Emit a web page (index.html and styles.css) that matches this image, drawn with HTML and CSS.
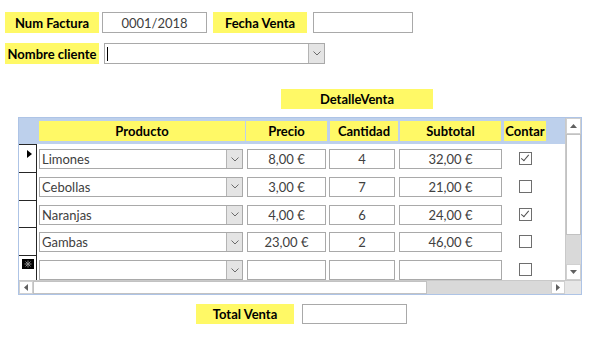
FILE: index.html
```html
<!DOCTYPE html>
<html lang="es">
<head>
  <meta charset="UTF-8">
  <title>Factura de venta</title>
  <link rel="stylesheet" href="styles.css">
</head>
<body>

  <div class="form">

    <!-- CABECERA -->
    <div class="line first">
      <div class="tag w-num">Num Factura</div>
      <div class="box w-factura">0001/2018</div>
      <div class="tag w-fecha">Fecha Venta</div>
      <div class="box w-fechabox"></div>
    </div>

    <div class="line second">
      <div class="tag w-num">Nombre cliente</div>
      <div class="combo w-cliente">
        <span class="caret"></span>
        <span class="drop"><svg width="8" height="5" viewBox="0 0 8 5"><polyline points="0.5,0.5 4,4 7.5,0.5" fill="none" stroke="#6b6b6b" stroke-width="1"/></svg></span>
      </div>
    </div>

    <div class="caption">DetalleVenta</div>

    <!-- SUBFORMULARIO -->
    <div class="grid">
      <div class="grid-body">
        <div class="grid-rows">

          <div class="grow head">
            <div class="sel"></div>
            <div class="hcell c-prod">Producto</div>
            <div class="hcell c-precio">Precio</div>
            <div class="hcell c-cant">Cantidad</div>
            <div class="hcell c-sub">Subtotal</div>
            <div class="hcell c-contar">Contar</div>
          </div>

          <div class="grow">
            <div class="sel"><span class="current"></span></div>
            <div class="combo f-prod">Limones<span class="drop"><svg width="8" height="5" viewBox="0 0 8 5"><polyline points="0.5,0.5 4,4 7.5,0.5" fill="none" stroke="#6b6b6b" stroke-width="1"/></svg></span></div>
            <div class="box f-precio">8,00 €</div>
            <div class="box f-cant">4</div>
            <div class="box f-sub">32,00 €</div>
            <div class="check-cell"><span class="check on"></span></div>
          </div>

          <div class="grow">
            <div class="sel"></div>
            <div class="combo f-prod">Cebollas<span class="drop"><svg width="8" height="5" viewBox="0 0 8 5"><polyline points="0.5,0.5 4,4 7.5,0.5" fill="none" stroke="#6b6b6b" stroke-width="1"/></svg></span></div>
            <div class="box f-precio">3,00 €</div>
            <div class="box f-cant">7</div>
            <div class="box f-sub">21,00 €</div>
            <div class="check-cell"><span class="check"></span></div>
          </div>

          <div class="grow">
            <div class="sel"></div>
            <div class="combo f-prod">Naranjas<span class="drop"><svg width="8" height="5" viewBox="0 0 8 5"><polyline points="0.5,0.5 4,4 7.5,0.5" fill="none" stroke="#6b6b6b" stroke-width="1"/></svg></span></div>
            <div class="box f-precio">4,00 €</div>
            <div class="box f-cant">6</div>
            <div class="box f-sub">24,00 €</div>
            <div class="check-cell"><span class="check on"></span></div>
          </div>

          <div class="grow">
            <div class="sel"></div>
            <div class="combo f-prod">Gambas<span class="drop"><svg width="8" height="5" viewBox="0 0 8 5"><polyline points="0.5,0.5 4,4 7.5,0.5" fill="none" stroke="#6b6b6b" stroke-width="1"/></svg></span></div>
            <div class="box f-precio">23,00 €</div>
            <div class="box f-cant">2</div>
            <div class="box f-sub">46,00 €</div>
            <div class="check-cell"><span class="check"></span></div>
          </div>

          <div class="grow">
            <div class="sel"><span class="newrec"><svg width="8" height="8" viewBox="0 0 8 8"><g stroke="#8a8a8a" stroke-width="1"><line x1="4" y1="0.5" x2="4" y2="7.5"/><line x1="0.5" y1="4" x2="7.5" y2="4"/><line x1="1.5" y1="1.5" x2="6.5" y2="6.5"/><line x1="6.5" y1="1.5" x2="1.5" y2="6.5"/></g></svg></span></div>
            <div class="combo f-prod"><span class="drop"><svg width="8" height="5" viewBox="0 0 8 5"><polyline points="0.5,0.5 4,4 7.5,0.5" fill="none" stroke="#6b6b6b" stroke-width="1"/></svg></span></div>
            <div class="box f-precio"></div>
            <div class="box f-cant"></div>
            <div class="box f-sub"></div>
            <div class="check-cell"><span class="check"></span></div>
          </div>

        </div>

        <div class="vscroll">
          <div class="sbtn"><svg width="7" height="4" viewBox="0 0 7 4"><polygon points="0,4 3.5,0 7,4" fill="#606060"/></svg></div>
          <div class="vthumb"></div>
          <div class="vtrack"></div>
          <div class="sbtn"><svg width="7" height="4" viewBox="0 0 7 4"><polygon points="0,0 3.5,4 7,0" fill="#606060"/></svg></div>
        </div>
      </div>

      <div class="hscroll">
        <div class="sbtn h"><svg width="4" height="7" viewBox="0 0 4 7"><polygon points="4,0 0,3.5 4,7" fill="#606060"/></svg></div>
        <div class="hthumb"></div>
        <div class="htrack"></div>
        <div class="sbtn h"><svg width="4" height="7" viewBox="0 0 4 7"><polygon points="0,0 4,3.5 0,7" fill="#606060"/></svg></div>
        <div class="corner"></div>
      </div>
    </div>

    <!-- PIE -->
    <div class="line total">
      <div class="tag w-total">Total Venta</div>
      <div class="box w-totalbox"></div>
    </div>

  </div>

</body>
</html>
```

FILE: styles.css
```css
body {
  margin: 0;
  background: #ffffff;
  font-family: Lato, "Open Sans", sans-serif;
  color: #404040;
}

.form {
  padding-top: 12px;
}

.line {
  display: flex;
  align-items: center;
  height: 21px;
}

.line.first {
  padding-left: 5px;
}

.line.second {
  margin-top: 10px;
  padding-left: 5px;
}

.line.total {
  margin-top: 9px;
  height: 20px;
  padding-left: 196px;
}

/* etiquetas amarillas */
.tag {
  background: #fff966;
  color: #000000;
  font-weight: bold;
  font-size: 13px;
  height: 100%;
  display: flex;
  align-items: center;
  justify-content: center;
  white-space: nowrap;
}

.w-num { width: 94px; }
.w-fecha { width: 94px; margin-left: 6px; }
.w-total { width: 98px; }

.box {
  box-sizing: border-box;
  height: 100%;
  border: 1px solid #a9a9a9;
  background: #ffffff;
  font-size: 13px;
  display: flex;
  align-items: center;
  justify-content: center;
}

.w-factura { width: 105px; margin-left: 3px; }
.w-fechabox { width: 100px; margin-left: 6px; }
.w-totalbox { width: 105px; margin-left: 8px; }

.combo {
  box-sizing: border-box;
  height: 100%;
  border: 1px solid #a9a9a9;
  background: #ffffff;
  font-size: 13px;
  display: flex;
  align-items: center;
  padding-left: 2px;
}

.w-cliente { width: 221px; margin-left: 5px; }

.caret {
  width: 1px;
  height: 14px;
  background: #000000;
}

.drop {
  margin-left: auto;
  align-self: stretch;
  width: 15px;
  background: #e4e4e4;
  border-left: 1px solid #b4b4b4;
  display: flex;
  align-items: center;
  justify-content: center;
}

.caption {
  margin: 25px 0 8px 281px;
  width: 152px;
  height: 20px;
  background: #fff966;
  color: #000000;
  font-weight: bold;
  font-size: 13px;
  display: flex;
  align-items: center;
  justify-content: center;
}

/* hoja de datos */
.grid {
  margin-left: 18px;
  width: 564px;
  height: 178px;
  box-sizing: border-box;
  border: 1px solid #aec4e6;
  display: flex;
  flex-direction: column;
}

.grid-body {
  display: flex;
  height: 162px;
}

.grid-rows {
  flex: 1;
  overflow: hidden;
}

.grow {
  display: grid;
  grid-template-columns: 18px 208px 82px 71px 104px 45px;
  height: 27.75px;
  align-items: start;
}

.grow.head {
  height: 26px;
  background: #bdd0ec;
}

.sel {
  box-sizing: border-box;
  height: 100%;
  position: relative;
  border-top: 1px solid #262626;
  border-right: 1px solid #262626;
}

.head .sel {
  border: none;
}

.current {
  position: absolute;
  left: 8px;
  top: 5px;
  width: 0;
  height: 0;
  border-top: 4px solid transparent;
  border-bottom: 4px solid transparent;
  border-left: 5px solid #000000;
}

.newrec {
  position: absolute;
  left: 3px;
  top: 3px;
  width: 12px;
  height: 10px;
  background: #000000;
  display: flex;
  align-items: center;
  justify-content: center;
}

.hcell {
  margin-top: 3px;
  height: 20px;
  background: #fff966;
  color: #000000;
  font-weight: bold;
  font-size: 13px;
  display: flex;
  align-items: center;
  justify-content: center;
  white-space: nowrap;
}

.c-prod { margin-left: 2px; width: 206px; }
.c-precio { margin-left: 1px; width: 81px; }
.c-cant { margin-left: 3px; width: 68px; }
.c-sub { margin-left: 2px; width: 101px; }
.c-contar { margin-left: 2px; width: 42px; }

.grow .box,
.grow .combo {
  margin-top: 5px;
  height: 20px;
}

.f-prod { margin-left: 2px; width: 204px; }
.f-precio { margin-left: 2px; width: 79px; }
.f-cant { margin-left: 2px; width: 66px; }
.f-sub { margin-left: 1px; width: 103px; }

.check-cell {
  display: flex;
  justify-content: center;
  padding-top: 8px;
  padding-left: 2px;
}

.check {
  box-sizing: border-box;
  width: 13px;
  height: 13px;
  border: 1px solid #6e6e6e;
  background: #ffffff;
  position: relative;
}

.check.on::after {
  content: "";
  position: absolute;
  left: 3px;
  top: 0px;
  width: 3px;
  height: 7px;
  border-right: 1.5px solid #4d4d4d;
  border-bottom: 1.5px solid #4d4d4d;
  transform: rotate(40deg);
}

/* barras de desplazamiento */
.vscroll {
  width: 16px;
  box-sizing: border-box;
  border-left: 1px solid #c9c9c9;
  background: #e6e6e6;
  display: flex;
  flex-direction: column;
}

.sbtn {
  box-sizing: border-box;
  height: 16px;
  background: #ffffff;
  border: 1px solid #d0d0d0;
  display: flex;
  align-items: center;
  justify-content: center;
}

.vthumb {
  height: 101px;
  box-sizing: border-box;
  background: #ffffff;
  border: 1px solid #c2c2c2;
}

.vtrack {
  flex: 1;
  background: #d9d9d9;
}

.hscroll {
  height: 14px;
  display: flex;
  border-top: 1px solid #c9c9c9;
  background: #e6e6e6;
}

.sbtn.h {
  height: 100%;
  width: 14px;
}

.hthumb {
  width: 394px;
  box-sizing: border-box;
  background: #ffffff;
  border: 1px solid #c2c2c2;
}

.htrack {
  flex: 1;
  background: #d9d9d9;
}

.corner {
  width: 16px;
  background: #e6e6e6;
}
```
